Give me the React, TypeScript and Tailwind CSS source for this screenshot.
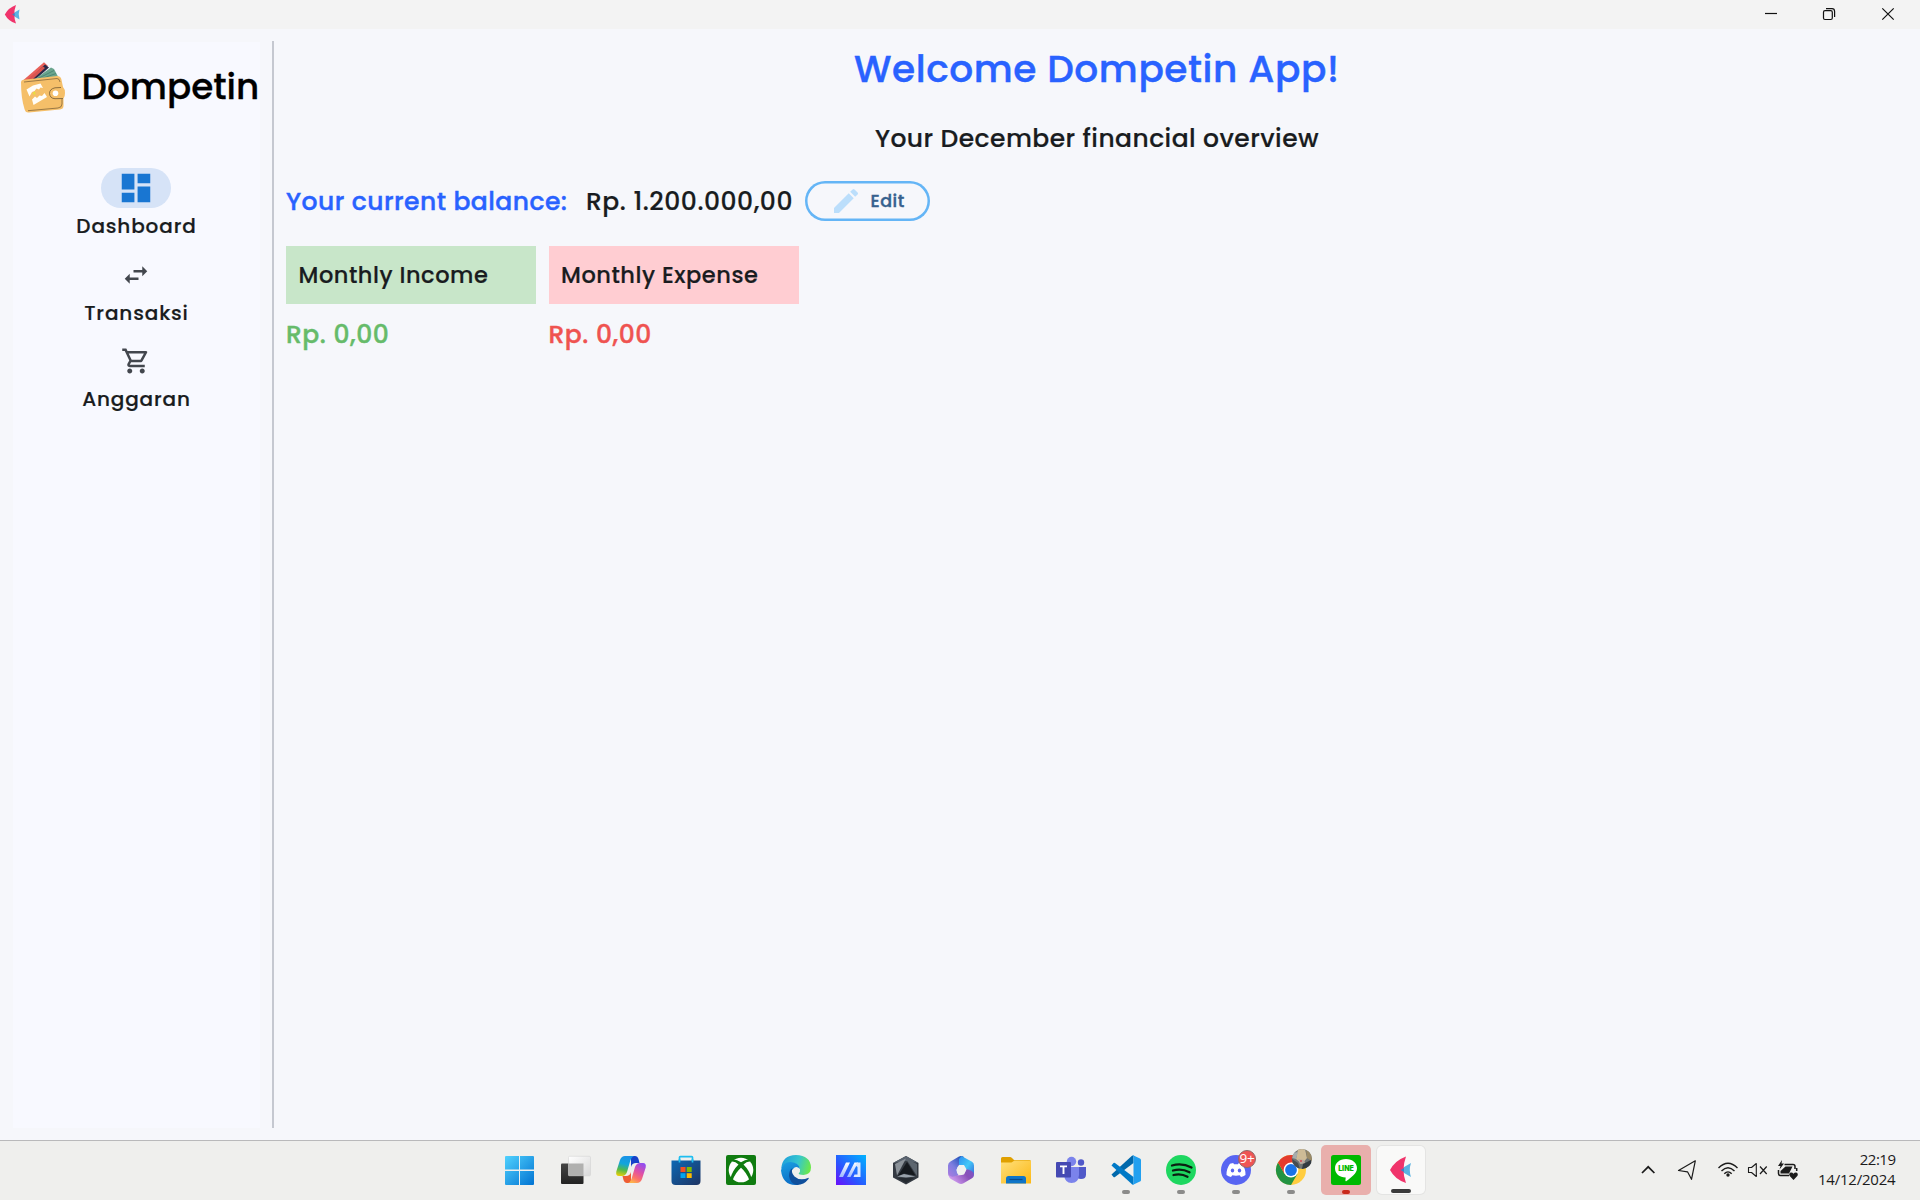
import type { ReactNode } from 'react';
import { MdDashboard, MdEdit, MdOutlineShoppingCart, MdSwapHoriz } from 'react-icons/md';

const brandText = 'font-[Poppins,Inter,sans-serif] font-medium whitespace-nowrap';
const dark = 'text-[#191c20] [-webkit-text-stroke:0.2px_currentColor]';
const accent = '[-webkit-text-stroke:0.4px_currentColor]';

function FletMark({ className }: { className: string }) {
  return (
    <svg className={className} viewBox="0 0 30 30">
      <path d="M13 15 L25 8 Q22.6 15 25 22Z" fill="#5ab4e2" />
      <path d="M4 15 Q9 5.5 20 1.5 Q15 15 20 28 Q9 24.5 4 15Z" fill="#f0346b" />
      <path d="M14.5 15 L18 13 V17Z" fill="#3f7fc4" />
    </svg>
  );
}

function WalletLogo() {
  return (
    <svg className="-mt-px h-[51px] w-[44px] shrink-0" viewBox="0 0 44 51">
      <path d="M2.5 18 L23 0.3 L27 4 L9 18Z" fill="#e8605a" />
      <path d="M8 17.5 L24 2.5 L28 5.5 L15 17Z" fill="#2b2a49" />
      <path d="M6 17.5 L22 4.5 L24 6 L12 17Z" fill="#d95550" />
      <path d="M14 17 L30 5.5 L33 7 L37 14.5 L22 17Z" fill="#6aa58f" />
      <path d="M17 16.5 L33 8.5 M21 16.5 L35 11.5" stroke="#3f7a69" strokeWidth="0.7" />
      <path d="M0 20 Q0 18 2.5 17.7 L36 14 Q39.5 14 40.3 17 L42 25 Q44 27 44 31 Q44 35 42.5 36.5 V44 Q42.5 47 39 47.5 L8 50.5 Q4.5 51 3.5 47 Q0 36 0 20Z" fill="#f5bf69" />
      <path d="M3 20 L36 16.5 Q38.5 16.5 39 20 M7 48.7 L37 46 Q41 45.5 41 42 V37" fill="none" stroke="#5e4a2c" strokeWidth="0.6" />
      <path d="M40 25.5 L34 25.8 Q28.5 27 28.5 31.5 Q29 36.5 34 36.7 L42 36.5" fill="none" stroke="#5e4a2c" strokeWidth="0.7" />
      <circle cx="34.5" cy="31.3" r="2.8" fill="#fff" />
      <path d="M5.5 27.5 L12 23.5 L19.5 21.5 L22 26 L19.5 25.5 L18 27.5 L15.5 26.5 L13.5 29 L11 30 L8.5 34.5Z" fill="#fffdf8" />
      <path d="M11 37.5 L14 34.5 L16 36 L18.5 33.5 L21 34 L23.5 31 L26 35 L12.5 43Z" fill="#fffdf8" />
      <path d="M12 30.5 L14 29.5 L14.5 32.5 L12.5 32.5Z" fill="#e7e03c" />
    </svg>
  );
}

function NavItem({ icon, label, pill }: { icon: ReactNode; label: string; pill?: boolean }) {
  return (
    <div className="flex h-[86.5px] flex-col items-center">
      <div className={`flex h-10 w-[70px] items-center justify-center rounded-full ${pill ? 'bg-[#d6e3f7] text-[#1976d2]' : 'text-[#43474e]'}`}>
        {icon}
      </div>
      <div className={`${brandText} ${dark} mt-[6px] pl-px text-[20px] leading-[24px] tracking-[0.86px]`}>{label}</div>
    </div>
  );
}

function SummaryCard({ title, color, amountColor }: { title: string; color: string; amountColor: string }) {
  return (
    <div className="w-[250px]">
      <div className={`flex h-[57.5px] items-center pt-px pl-[12.5px] ${color}`}>
        <span className={`${brandText} ${dark} text-[22.5px] leading-none tracking-[0.54px]`}>{title}</span>
      </div>
      <div className={`${brandText} ${accent} text-[25px] leading-[61px] tracking-[0.55px] ${amountColor}`}>Rp. 0,00</div>
    </div>
  );
}

const icon = 'block size-[30px] overflow-visible';

function StartIcon() {
  return (
    <svg className={icon} viewBox="0 0 30 30">
      <defs>
        <linearGradient id="start" gradientUnits="userSpaceOnUse" x1="0" y1="1" x2="28" y2="30">
          <stop stopColor="#4fd0fd" /><stop offset="1" stopColor="#0173d2" />
        </linearGradient>
      </defs>
      <path d="M-1 2 Q-1 1 0 1 H13 V14.5 H-1Z M14 1 H27 Q28 1 28 2 V14.5 H14Z M-1 16 H13 V30 H0 Q-1 30 -1 29Z M14 16 H28 V29 Q28 30 27 30 H14Z" fill="url(#start)" />
    </svg>
  );
}

function TaskViewIcon() {
  return (
    <svg className={icon} viewBox="0 0 30 30">
      <defs>
        <linearGradient id="tv1" x1="0" y1="0" x2="0" y2="1"><stop stopColor="#444" /><stop offset="1" stopColor="#222" /></linearGradient>
        <linearGradient id="tv2" x1="0" y1="0" x2="1" y2="1"><stop stopColor="#fff" /><stop offset="1" stopColor="#d8d8d8" /></linearGradient>
      </defs>
      <rect x="0" y="8.5" width="22.5" height="20.5" rx="1" fill="url(#tv1)" />
      <rect x="7.5" y="1.3" width="22" height="19.5" rx="1" fill="url(#tv2)" stroke="#cfcfcf" strokeWidth="0.5" />
      <rect x="7.5" y="8.5" width="15" height="12.3" fill="#b0b0af" />
    </svg>
  );
}

function CopilotIcon() {
  return (
    <svg className={icon} viewBox="0 0 30 30">
      <defs>
        <linearGradient id="cp1" x1="0.3" y1="0" x2="0.1" y2="1"><stop stopColor="#1a94e6" /><stop offset="0.35" stopColor="#12a5dc" /><stop offset="0.65" stopColor="#51b94e" /><stop offset="1" stopColor="#f5d000" /></linearGradient>
        <linearGradient id="cp2" x1="0.8" y1="0" x2="0.3" y2="1"><stop stopColor="#8f4df3" /><stop offset="0.45" stopColor="#e050a5" /><stop offset="0.75" stopColor="#fc7169" /><stop offset="1" stopColor="#fdb44b" /></linearGradient>
      </defs>
      <path d="M15 1 H19 Q21.5 1 22.5 4 L23.5 8 H20 Q16 8 15 12Z" fill="#1641c9" />
      <path d="M15 28 H11 Q8.5 28 7.5 25 L6.5 21 H10 Q14 21 15 17Z" fill="#ee5d34" />
      <path d="M9 1 H18 Q15.5 2 14.5 5 L11 17 Q9.5 21 6 21 H3 Q-0.5 21 0.3 16.5 L4 5 Q5.5 1 9 1Z" fill="url(#cp1)" />
      <path d="M21 28 H12 Q14.5 27 15.5 24 L19 12 Q20.5 8 24 8 H27 Q30.5 8 29.7 12.5 L26 24 Q24.5 28 21 28Z" fill="url(#cp2)" />
    </svg>
  );
}

function StoreIcon() {
  return (
    <svg className={icon} viewBox="0 0 30 30">
      <defs><linearGradient id="st" x1="0" y1="0" x2="1" y2="1"><stop stopColor="#0d68b4" /><stop offset="1" stopColor="#1e3463" /></linearGradient></defs>
      <path d="M8.5 8 V2.5 Q8.5 1.7 9.3 1.7 H20.7 Q21.5 1.7 21.5 2.5 V8" fill="none" stroke="#1fbef0" strokeWidth="1.7" />
      <path d="M0.5 5.5 H29.5 V26 Q29.5 30 25.5 30 H4.5 Q0.5 30 0.5 26Z" fill="url(#st)" />
      <path d="M8.5 4 V7.5 M21.5 4 V7.5" stroke="#1fbef0" strokeWidth="1.7" />
      <path d="M9.5 12 H14.5 V17 H9.5Z" fill="#f25022" />
      <path d="M15.7 12 H20.7 V17 H15.7Z" fill="#7fba00" />
      <path d="M9.5 18.2 H14.5 V23 H9.5Z" fill="#00a4ef" />
      <path d="M15.7 18.2 H20.7 V23 H15.7Z" fill="#ffb900" />
    </svg>
  );
}

function XboxIcon() {
  return (
    <svg className={icon} viewBox="0 0 30 30">
      <rect width="30" height="30" rx="2" fill="#107c10" />
      <circle cx="15" cy="15" r="12.3" fill="#fff" />
      <path d="M6.5 4.5 Q10.5 4 15 7.3 Q19.5 4 23.5 4.5 L24.5 6.5 Q21 6 17.5 9.5 Q24 16 25.5 23.5 L23.5 25.5 Q20.5 17.5 15 12.8 Q9.5 17.5 6.5 25.5 L4.5 23.5 Q6 16 12.5 9.5 Q9 6 5.5 6.5Z" fill="#107c10" />
    </svg>
  );
}

function EdgeIcon() {
  return (
    <svg className={icon} viewBox="0 0 30 30">
      <defs>
        <linearGradient id="ed1" x1="0" y1="0.3" x2="1" y2="0.5"><stop stopColor="#1f9fdb" /><stop offset="0.55" stopColor="#35c6cf" /><stop offset="1" stopColor="#6be84a" /></linearGradient>
        <linearGradient id="ed2" x1="0" y1="0" x2="0.3" y2="1"><stop stopColor="#1ba0e2" /><stop offset="1" stopColor="#0c6fc7" /></linearGradient>
      </defs>
      <path d="M0.3 14 Q1 0 15 0 Q29.5 0.5 30 12.5 Q30 19.5 22.5 20 Q17.5 20 17.7 18.3 Q19.5 17 19 14 Q17.5 8 10 8 Q3 8.5 0.3 14Z" fill="url(#ed1)" />
      <path d="M0 15.5 Q1.5 7 9.5 7 Q18 7.5 19 14 Q15 10 12 14 Q6 20 18 29.7 Q2 32 0 15.5Z" fill="url(#ed2)" />
      <path d="M11.5 13 Q9.5 17.5 13.5 21.5 Q19 26.5 27.5 22.8 Q28 23.2 27.5 24 Q23 29.8 16 30 Q9 28.5 8 21 Q8 15 11.5 13Z" fill="#0f4f9c" />
    </svg>
  );
}

function MyAsusIcon() {
  return (
    <svg className={icon} viewBox="0 0 30 30">
      <defs>
        <linearGradient id="as1" x1="0" y1="1" x2="1" y2="0"><stop stopColor="#6b0dfb" /><stop offset="0.4" stopColor="#2a55ff" /><stop offset="1" stopColor="#00b4ff" /></linearGradient>
        <linearGradient id="as2" x1="0" y1="0" x2="0" y2="1"><stop stopColor="#fff" /><stop offset="1" stopColor="#9db9ff" /></linearGradient>
      </defs>
      <rect width="30" height="30" fill="url(#as1)" />
      <path d="M3 22 L10 7.5 H14 L7 22Z" fill="url(#as2)" />
      <path d="M11 22 L18.5 7.5 H22 L14.5 22Z" fill="url(#as2)" />
      <path d="M21 7.5 H24.5 V22 H17.5 L18.5 19.5 H21.5 V12 L19.5 10.5Z" fill="#dbe8ff" />
    </svg>
  );
}

function ArmouryIcon() {
  return (
    <svg className={icon} viewBox="0 0 30 30">
      <path d="M15 1 L27.5 8 V22.5 L15 29.5 L2 22.5 V8Z" fill="#343a42" />
      <path d="M15 1 L27.5 8 L15 6 L2 8Z" fill="#59636e" />
      <path d="M4 9 L15 3.5 L6 20.5Z" fill="#8b9299" />
      <path d="M15 3.5 L26 9 V21 L17 7Z" fill="#5d666f" />
      <path d="M16 7 L24.5 20.5 L13 18.5 L6.5 21.5Z" fill="#15191e" />
      <path d="M6 21.5 L13 19 L24.5 21.5 L15 22.5Z" fill="#98a1aa" />
      <path d="M6.5 23 H23 L15 28Z" fill="#252a30" />
    </svg>
  );
}

function M365Icon() {
  return (
    <svg className={icon} viewBox="0 0 30 30">
      <defs>
        <linearGradient id="m1" x1="0.8" y1="0" x2="0" y2="1"><stop stopColor="#1c4fb5" /><stop offset="0.5" stopColor="#7d7ee0" /><stop offset="1" stopColor="#b57be0" /></linearGradient>
        <linearGradient id="m2" x1="0" y1="0" x2="1" y2="1"><stop stopColor="#2d8ff0" /><stop offset="0.5" stopColor="#43c8f8" /><stop offset="1" stopColor="#3460d8" /></linearGradient>
        <linearGradient id="m3" x1="0" y1="0.5" x2="1" y2="0"><stop stopColor="#cf9cf0" /><stop offset="0.6" stopColor="#8a50b8" /><stop offset="1" stopColor="#7a56c8" /></linearGradient>
      </defs>
      <path d="M13 1.5 Q15.5 0.5 18 2 L13.5 10 Q10.5 12 10.5 15 Q10.5 18 12.5 20 L7 24 Q2 22 2 18 V10.5 Q2 8 4.5 6.5Z" fill="url(#m1)" />
      <path d="M15.5 1 L26 6.8 Q28 8 28 10.5 V19 Q28 21 26 22.5 Q20 24 19.5 18 V14 Q19.5 10.5 13 10 V4Z" fill="url(#m2)" />
      <path d="M2.5 20 Q6 23 10.5 20.5 L16 20 Q20 18 19.5 14 Q27 15 28 19 Q28 22 26 23.3 L17.5 28.3 Q15 29.5 12.5 28.3 L4.5 23.7 Q2.8 22.5 2.5 20Z" fill="url(#m3)" />
      <path d="M13 10 H18 L20.5 14.5 L18 19.5 H13 L10.5 15Z" fill="#f0f0ef" />
    </svg>
  );
}

function ExplorerIcon() {
  return (
    <svg className={icon} viewBox="0 0 30 30">
      <defs><linearGradient id="ex" x1="0" y1="0" x2="1" y2="1"><stop stopColor="#ffe07c" /><stop offset="1" stopColor="#fcb814" /></linearGradient></defs>
      <path d="M0 3.5 Q0 2 1.5 2 H9 Q10 2 11 3 L13 5 H28.5 Q30 5 30 6.5 V12 H0Z" fill="#e0a000" />
      <path d="M0 7.5 H10.5 L13.5 5.5 H29 Q30 5.5 30 6.5 V28.5 H0Z" fill="url(#ex)" />
      <path d="M5 28.5 V23.5 Q5 21 7.5 21 H22.5 Q25 21 25 23.5 V28.5Z" fill="#0f75c8" />
      <path d="M8.5 24.5 H21.5" stroke="#0a4b8c" strokeWidth="1.2" />
    </svg>
  );
}

function TeamsIcon() {
  return (
    <svg className={icon} viewBox="0 0 30 30">
      <circle cx="25" cy="7.5" r="3.2" fill="#5059c9" />
      <path d="M20 12 H30 V19.5 Q30 24 25 24 Q21 24 20 21Z" fill="#5059c9" />
      <circle cx="15.5" cy="6.5" r="4.7" fill="#7b83eb" />
      <path d="M8 12 H23 V20 Q22.5 28 15.5 28 Q9 28 8 20Z" fill="#7b83eb" />
      <rect y="7" width="15" height="15.5" rx="1" fill="#4549b3" />
      <path d="M4 11.4 H11 M7.5 11.4 V19" fill="none" stroke="#fff" strokeWidth="1.9" />
    </svg>
  );
}

function CodeIcon() {
  return (
    <svg className={icon} viewBox="0 0 30 30">
      <path d="M0.5 19.5 L2.5 22 Q3.2 22.5 4 22 L22.5 8 V0.5 Q21.5 0.3 20.7 1 L0.5 19.5Z" fill="#0068ab" />
      <path d="M0.5 10.5 L2.5 8 Q3.2 7.5 4 8 L22.5 22 V29.5 Q21.5 29.7 20.7 29Z" fill="#0079c6" />
      <path d="M22 0.3 L29 3.5 Q30 4 30 5 V25 Q30 26 29 26.5 L22 29.7 Q21.2 29.7 20.7 29 Q22.5 30 22.5 27.5 V2.5 Q22.5 0 20.7 1Z" fill="#22a0f0" />
    </svg>
  );
}

function SpotifyIcon() {
  return (
    <svg className={icon} viewBox="0 0 30 30">
      <circle cx="15" cy="15" r="15" fill="#1ed760" />
      <path d="M6 10.5 Q16 7.5 25.5 12.5 M7 15.5 Q15.5 13 23.5 17.2 M7.5 20 Q15 18 21.5 21.7" fill="none" stroke="#0b1f12" strokeWidth="2.3" strokeLinecap="round" />
    </svg>
  );
}

function DiscordIcon() {
  return (
    <svg className={icon} viewBox="0 0 30 30">
      <circle cx="15" cy="15" r="15" fill="#5865f2" />
      <path d="M9 8.8 L12.2 8 L13 9.3 H17 L17.8 8 L21 8.8 Q24.8 14 24.5 20 Q22.5 21.7 20 22 L18.7 20.3 Q15 21 11.3 20.3 L10 22 Q7.5 21.7 5.5 20 Q5.2 14 9 8.8Z" fill="#fff" />
      <ellipse cx="11.5" cy="15.5" rx="1.7" ry="1.9" fill="#5865f2" />
      <ellipse cx="18.5" cy="15.5" rx="1.7" ry="1.9" fill="#5865f2" />
    </svg>
  );
}

function ChromeIcon() {
  return (
    <svg className={icon} viewBox="0 0 30 30">
      <circle cx="15" cy="15" r="15" fill="#ffcd40" />
      <path d="M2 7.5 A15 15 0 0 0 15 30 L21.5 18.7 L8.5 18.7Z" fill="#229342" />
      <path d="M2 7.5 A15 15 0 0 1 28 7.5 H15 L8.5 18.7Z" fill="#e33b2e" />
      <circle cx="15" cy="15" r="7.4" fill="#fff" />
      <circle cx="15" cy="15" r="5.9" fill="#1a73e8" />
      <defs><clipPath id="avatar"><circle cx="26" cy="4" r="10" /></clipPath></defs>
      <g clipPath="url(#avatar)">
        <rect x="16" y="-6" width="20" height="20" fill="#6f7474" />
        <path d="M22 -6 H29 L31 3 L26 9 L20 4Z" fill="#cdbb96" />
        <path d="M30 -6 H36 V6 L31 3Z" fill="#9a8a66" />
        <path d="M16 4 L22 8 L24 14 H16Z" fill="#454d50" />
        <path d="M27 9 L35 5 V14 H26Z" fill="#333a40" />
        <path d="M22 4 L28 5 L29 8 L24 9Z" fill="#b9a9a0" />
        <circle cx="25" cy="6" r="1" fill="#d84a50" />
        <path d="M16 -2 L22 -3 L20 4 L16 3Z" fill="#a7adad" />
      </g>
    </svg>
  );
}

function LineIcon() {
  return (
    <div className="relative size-[30px]">
      <svg className={icon} viewBox="0 0 30 30">
        <rect width="30" height="30" rx="2.5" fill="#00b900" />
        <path d="M15 4 C21.5 4 26 8 26 13.2 C26 18.5 20 22.5 15.5 26 C14.5 26.5 14.2 26 14.5 24.5 L14.7 22.5 C8.5 22.5 4 18.5 4 13.2 C4 8 8.5 4 15 4Z" fill="#fff" />
      </svg>
      <span className="absolute inset-x-0 top-[9px] text-center font-[Inter] text-[7px] leading-[9px] font-black text-[#00b900]">LINE</span>
    </div>
  );
}

const apps: { name: string; node: ReactNode; tile?: string; bar?: string }[] = [
  { name: 'Start', node: <StartIcon /> },
  { name: 'Task view', node: <TaskViewIcon /> },
  { name: 'Copilot', node: <CopilotIcon /> },
  { name: 'Store', node: <StoreIcon /> },
  { name: 'Xbox', node: <XboxIcon /> },
  { name: 'Edge', node: <EdgeIcon /> },
  { name: 'MyASUS', node: <MyAsusIcon /> },
  { name: 'Armoury Crate', node: <ArmouryIcon /> },
  { name: 'Microsoft 365', node: <M365Icon /> },
  { name: 'Explorer', node: <ExplorerIcon /> },
  { name: 'Teams', node: <TeamsIcon /> },
  { name: 'VS Code', node: <CodeIcon />, bar: 'w-2 bg-[#8b8b8a]' },
  { name: 'Spotify', node: <SpotifyIcon />, bar: 'w-2 bg-[#8b8b8a]' },
  {
    name: 'Discord',
    bar: 'w-2 bg-[#8b8b8a]',
    node: (
      <div className="relative">
        <DiscordIcon />
        <span className="absolute -top-[5px] left-[17px] flex size-[18px] items-center justify-center rounded-full border border-[#8f6a6a] bg-[#ef5454] font-['Open_Sans'] text-[13.5px] leading-none tracking-[-0.3px] text-white">9+</span>
      </div>
    ),
  },
  { name: 'Chrome', node: <ChromeIcon />, bar: 'w-2 bg-[#8b8b8a]' },
  { name: 'LINE', node: <LineIcon />, tile: 'bg-[#e9afac]', bar: 'w-2 bg-[#c92a1c]' },
  { name: 'Dompetin', node: <FletMark className="block size-[30px]" />, tile: 'my-px w-12! h-12! bg-[#f9f9f8] shadow-[0_0_0_1px_#e4e4e3]', bar: 'w-5 bg-[#3a3a3a]' },
];

export default function App() {
  return (
    <div className="flex h-[1200px] w-[1920px] flex-col overflow-hidden bg-[#f6f7fb]">
      <header className="flex h-[29px] shrink-0 items-center bg-[#f3f3f3]">
        <FletMark className="ml-[1.5px] -mt-px size-[21px]" />
        <svg className="ml-auto h-[29px] w-[180px]" viewBox="0 0 180 29" fill="none" stroke="#111" strokeWidth="1.2">
          <path d="M25 13.5 H37" />
          <rect x="83.5" y="10.7" width="8.8" height="8.8" rx="1.5" />
          <path d="M86 8.7 H92 Q94.6 8.7 94.6 11.5 V17" />
          <path d="M142.3 8.3 L153.7 19.7 M153.7 8.3 L142.3 19.7" />
        </svg>
      </header>

      <div className="flex h-[1111px] shrink-0">
        <aside className="mt-[12.5px] ml-[13px] h-[1086px] w-[247px] bg-[#f8f9ff]">
          <div className="flex h-[93px] items-center pl-2">
            <WalletLogo />
            <span className={`${brandText} -mt-[2px] ml-[16.5px] text-[35.8px] leading-none text-black [-webkit-text-stroke:0.3px_currentColor]`}>Dompetin</span>
          </div>
          <nav className="mt-[33.5px] -ml-px">
            <NavItem pill icon={<MdDashboard className="size-[38px]" />} label="Dashboard" />
            <NavItem icon={<MdSwapHoriz className="size-[30px]" />} label="Transaksi" />
            <NavItem icon={<MdOutlineShoppingCart className="size-[30px]" />} label="Anggaran" />
          </nav>
        </aside>
        <div className="mt-3 ml-3 h-[1087px] w-[1.5px] bg-[#c5c8d0]" />

        <main className="flex-1 pl-[12.5px]">
          <h1 className={`${brandText} ${accent} -ml-[12.5px] pt-px text-center text-[37.5px] leading-[79px] tracking-[0.56px] text-[#2962ff]`}>Welcome Dompetin App!</h1>
          <p className={`${brandText} ${dark} -ml-[12px] text-center text-[25px] leading-[59px] tracking-[0.45px]`}>Your December financial overview</p>
          <div className="flex h-[67px] items-center">
            <span className={`${brandText} ${accent} w-[300px] text-[25px] leading-none tracking-[0.47px] text-[#2962ff]`}>Your current balance:</span>
            <span className={`${brandText} ${dark} w-[219px] text-[25px] leading-none tracking-[0.54px]`}>Rp. 1.200.000,00</span>
            <button className="-mt-px flex h-10 w-[125px] items-center rounded-full pl-[25px] shadow-[inset_0_0_0_2.5px_#64b5f6]">
              <MdEdit className="size-[32px] text-[#bbdefb]" />
              <span className={`${brandText} ${accent} mt-[2px] ml-[8.5px] text-[17.5px] leading-none tracking-[0.5px] text-[#36618e]`}>Edit</span>
            </button>
          </div>
          <div className="mt-[11px] flex gap-[12.5px]">
            <SummaryCard title="Monthly Income" color="bg-[#c8e6c9]" amountColor="text-[#66bb6a]" />
            <SummaryCard title="Monthly Expense" color="bg-[#ffcdd2]" amountColor="text-[#ef5350]" />
          </div>
        </main>
      </div>

      <footer className="flex h-[60px] shrink-0 border-t border-[#b9b9bb] bg-[#efefed]">
        <div className="ml-[493.5px] flex pt-[4px]">
          {apps.map((app) => (
            <div key={app.name} className="flex w-[55px] justify-center">
              <div className={`relative flex h-[50px] w-[50px] items-center justify-center rounded-[5px] ${app.tile ?? ''}`}>
                {app.node}
                {app.bar && <div className={`absolute inset-x-0 bottom-px mx-auto h-1 rounded-full ${app.bar}`} />}
              </div>
            </div>
          ))}
        </div>
        <svg className="ml-auto h-[59px] w-[170px]" viewBox="1635 1141 170 59" fill="none" stroke="#1b1b1b" strokeWidth="1.4">
          <path d="M1642 1173 L1648.2 1166.8 L1654.4 1173" strokeWidth="1.7" />
          <path d="M1678.5 1170.5 L1695.3 1160.8 L1691.5 1179.3 L1687.5 1171.8Z" strokeWidth="1.2" strokeLinejoin="round" />
          <path d="M1718.5 1168 Q1728 1158.5 1737.5 1168 M1721.5 1171 Q1728 1164.5 1734.5 1171 M1724.3 1173.8 Q1728 1170 1731.7 1173.8" />
          <circle cx="1728" cy="1175" r="1.7" fill="#1b1b1b" stroke="none" />
          <path d="M1748.5 1167.5 H1751.5 L1756.3 1163.5 V1176.5 L1751.5 1172.5 H1748.5Z" strokeLinejoin="round" strokeWidth="1.1" />
          <path d="M1760 1166.5 L1766.7 1174 M1766.7 1166.5 L1760 1174" strokeWidth="1.2" />
          <path d="M1784.5 1164.5 H1793 Q1795 1164.5 1795 1166.5 V1169 M1789 1175.5 H1780.5 Q1778.5 1175.5 1778.5 1173.5 V1170 M1796.7 1168 V1171" strokeWidth="1.5" />
          <path d="M1785.5 1166.5 H1792.5 L1789 1173.5 H1780.5 V1171Z" fill="#1b1b1b" stroke="none" />
          <path d="M1782 1160 L1778 1166 H1780.5 L1779.5 1169.5 L1784 1163.5 H1781.5Z" fill="#1b1b1b" stroke="none" />
          <path d="M1793.5 1180 L1789.5 1175.8 Q1788.5 1173 1790.8 1172.4 Q1792.5 1172.2 1793.5 1173.8 Q1794.5 1172.2 1796.2 1172.4 Q1798.5 1173 1797.5 1175.8Z" fill="#1b1b1b" stroke="none" />
        </svg>
        <div className="w-[115px] pt-[8px] pr-[24.5px] text-right font-['Open_Sans'] text-[15px] leading-[20px] whitespace-nowrap text-[#1b1b1b]">
          <div className="tracking-[-0.5px]">22:19</div>
          <div className="tracking-[-0.2px]">14/12/2024</div>
        </div>
      </footer>
    </div>
  );
}
